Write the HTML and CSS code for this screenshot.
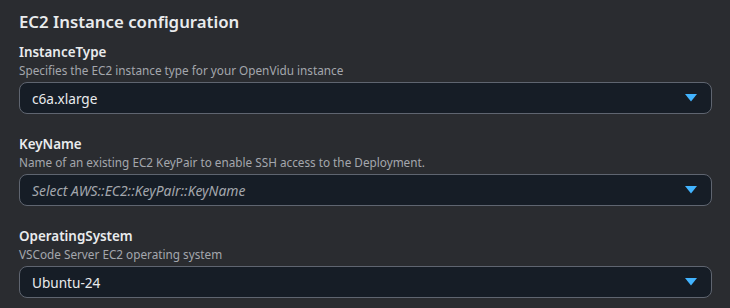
FILE: index.html
```html
<!DOCTYPE html>
<html>
<head>
<meta charset="utf-8">
<link rel="stylesheet" href="styles.css">
</head>
<body>
<div class="panel">
  <h2 class="title">EC2 Instance configuration</h2>
  <div class="field">
    <div class="label">InstanceType</div>
    <div class="desc">Specifies the EC2 instance type for your OpenVidu instance</div>
    <div class="select"><span class="value">c6a.xlarge</span><svg class="caret" width="12" height="8" viewBox="0 0 12 8"><path d="M0 0H12L6 7.5Z" fill="#42b4ff"/></svg></div>
  </div>
  <div class="field">
    <div class="label">KeyName</div>
    <div class="desc">Name of an existing EC2 KeyPair to enable SSH access to the Deployment.</div>
    <div class="select"><span class="value placeholder">Select AWS::EC2::KeyPair::KeyName</span><svg class="caret" width="12" height="8" viewBox="0 0 12 8"><path d="M0 0H12L6 7.5Z" fill="#42b4ff"/></svg></div>
  </div>
  <div class="field">
    <div class="label">OperatingSystem</div>
    <div class="desc">VSCode Server EC2 operating system</div>
    <div class="select"><span class="value">Ubuntu-24</span><svg class="caret" width="12" height="8" viewBox="0 0 12 8"><path d="M0 0H12L6 7.5Z" fill="#42b4ff"/></svg></div>
  </div>
</div>
</body>
</html>
```
FILE: styles.css
```css
html, body {
  margin: 0;
  padding: 0;
  background: #2a2c30;
}
body {
  font-family: "Noto Sans", "Open Sans", sans-serif;
  color: #e9ebed;
}
.panel {
  padding: 10px 18px 0 19px;
  display: flex;
  flex-direction: column;
}
.title {
  margin: 0 0 8px 0;
  font-size: 16.8px;
  font-weight: 600;
  line-height: 24px;
  color: #e9ebed;
}
.field {
  display: flex;
  flex-direction: column;
  margin-bottom: 20px;
}
.label {
  font-size: 13.4px;
  font-weight: 600;
  line-height: 20px;
  color: #e9ebed;
}
.desc {
  font-size: 11.75px;
  line-height: 16px;
  color: #a4a7ad;
  margin-bottom: 4px;
}
.select {
  box-sizing: border-box;
  height: 32px;
  border: 1px solid #5f6570;
  border-radius: 8px;
  background: #161d26;
  display: flex;
  align-items: center;
  justify-content: space-between;
  padding: 0 14px 0 12px;
}
.value {
  font-size: 13.6px;
  color: #e9ebed;
}
.placeholder {
  font-size: 13.9px;
  font-style: italic;
  color: #a4a7ad;
}
.caret {
  display: block;
}
```
